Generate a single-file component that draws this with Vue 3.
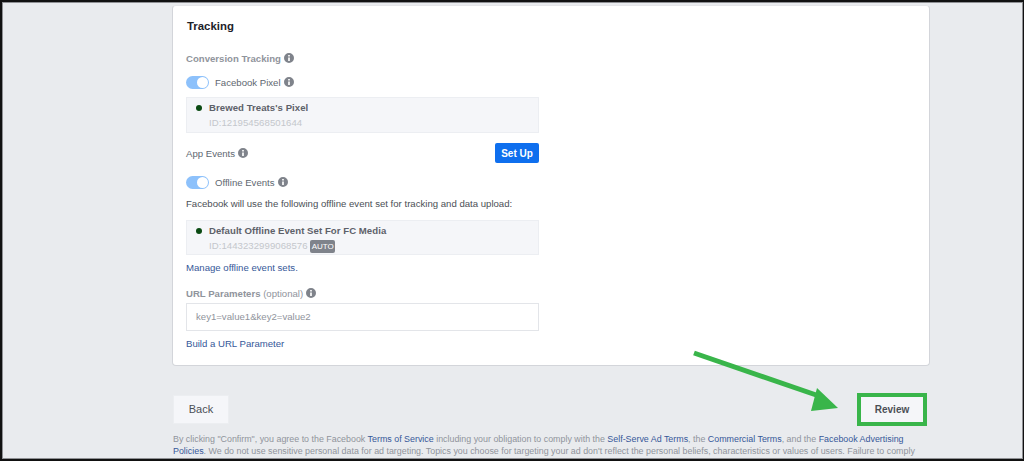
<script setup>
const infoPath = 'M6 0a6 6 0 1 0 0 12A6 6 0 0 0 6 0zm-1 2.4h2v1.9H5V2.4zm0 3h2v4.2H5V5.4z'
</script>

<template>
  <div class="frame">
    <main class="page">
      <section class="card">
        <h2 class="title">Tracking</h2>

        <div class="row heading">
          <span class="muted-label">Conversion Tracking</span>
          <svg class="info" viewBox="0 0 12 12"><path :d="infoPath" fill-rule="evenodd" /></svg>
        </div>

        <div class="row toggle-row">
          <span class="toggle"><span class="knob"></span></span>
          <span class="label">Facebook Pixel</span>
          <svg class="info" viewBox="0 0 12 12"><path :d="infoPath" fill-rule="evenodd" /></svg>
        </div>

        <div class="source">
          <span class="dot"></span>
          <div>
            <div class="source-name">Brewed Treats's Pixel</div>
            <div class="source-id">ID:121954568501644</div>
          </div>
        </div>

        <div class="row app-events">
          <span class="label">App Events</span>
          <svg class="info" viewBox="0 0 12 12"><path :d="infoPath" fill-rule="evenodd" /></svg>
          <button class="setup">Set Up</button>
        </div>

        <div class="row toggle-row offline">
          <span class="toggle"><span class="knob"></span></span>
          <span class="label">Offline Events</span>
          <svg class="info" viewBox="0 0 12 12"><path :d="infoPath" fill-rule="evenodd" /></svg>
        </div>

        <p class="desc">Facebook will use the following offline event set for tracking and data upload:</p>

        <div class="source second">
          <span class="dot"></span>
          <div>
            <div class="source-name">Default Offline Event Set For FC Media</div>
            <div class="source-id">ID:1443232999068576 <span class="auto">AUTO</span></div>
          </div>
        </div>

        <a class="link manage">Manage offline event sets.</a>

        <div class="row url-label">
          <span class="muted-label">URL Parameters <span class="optional">(optional)</span></span>
          <svg class="info" viewBox="0 0 12 12"><path :d="infoPath" fill-rule="evenodd" /></svg>
        </div>

        <div class="input">key1=value1&amp;key2=value2</div>

        <a class="link build">Build a URL Parameter</a>
      </section>

      <div class="actions">
        <button class="btn back">Back</button>
        <div class="highlight"><button class="btn review">Review</button></div>
      </div>

      <p class="legal">By clicking "Confirm", you agree to the Facebook <a>Terms of Service</a> including your obligation to comply with the <a>Self-Serve Ad Terms</a>, the <a>Commercial Terms</a>, and the <a>Facebook Advertising</a><br /><a>Policies</a>. We do not use sensitive personal data for ad targeting. Topics you choose for targeting your ad don't reflect the personal beliefs, characteristics or values of users. Failure to comply</p>
    </main>

    <svg class="arrow" viewBox="0 0 1024 461" aria-hidden="true">
      <path d="M694 353 L822 397" stroke="#39b54a" stroke-width="5" fill="none" />
      <path d="M817 388 L838 408 L811 411 Z" fill="#39b54a" />
    </svg>
  </div>
</template>

<style>
html, body { margin: 0; height: 100%; overflow: hidden; background: #e9ebee; }
</style>

<style scoped>
.frame {
  position: relative;
  box-sizing: border-box;
  width: 1024px;
  height: 461px;
  overflow: hidden;
  background: #e9ebee;
  border: solid #111;
  border-width: 2px 1px 2px 2px;
  box-shadow: inset 0 0 0 1px #8f9094;
  font-family: "Liberation Sans", Arial, sans-serif;
  font-size: 9.6px;
  color: #4b4f56;
}
.page { width: 758px; margin-left: 170px; padding-top: 3px; }
.card {
  box-sizing: border-box;
  height: 361px;
  padding: 0 13px;
  background: #fff;
  border: 1px solid #d3d5da;
  border-top-color: #e5e6e9;
  border-radius: 4px;
}
.title { margin: 13px 0 0; padding-left: 1px; font-size: 11.4px; line-height: 14px; font-weight: 700; color: #1d2129; }
.row { display: flex; align-items: center; height: 14px; gap: 3px; width: 353px; }
.heading { margin-top: 18px; }
.muted-label { color: #90949c; font-weight: 700; }
.optional { font-weight: 400; }
.label { color: #606770; }
.info { width: 10px; height: 10px; fill: #7f838b; flex: none; }
.toggle-row { margin-top: 10px; }
.toggle-row .label { margin-left: 3px; }
.toggle {
  position: relative;
  width: 23px;
  height: 13px;
  border-radius: 7px;
  background: #8dc1fb;
  flex: none;
}
.knob {
  position: absolute;
  top: 1px;
  right: 1px;
  width: 11px;
  height: 11px;
  border-radius: 50%;
  background: #fff;
}
.source {
  box-sizing: border-box;
  display: flex;
  gap: 7px;
  width: 353px;
  height: 36px;
  margin-top: 8px;
  padding: 3px 9px;
  background: #f5f6f9;
  border: 1px solid #eceef2;
}
.dot { width: 6px; height: 6px; margin-top: 4px; border-radius: 50%; background: #0a4a12; flex: none; }
.source-name { font-weight: 700; line-height: 14px; color: #5d6169; letter-spacing: .05px; }
.source-id { line-height: 15px; color: #c4c7cc; letter-spacing: .05px; }
.auto {
  display: inline-block;
  box-sizing: border-box;
  width: 25px;
  height: 13px;
  line-height: 13px;
  text-align: center;
  border-radius: 2px;
  background: #7f838b;
  color: #fff;
  font-size: 8px;
  letter-spacing: 0;
}
.app-events { margin-top: 10px; height: 20px; }
.setup {
  margin-left: auto;
  width: 44px;
  height: 20px;
  padding: 0;
  border: 0;
  border-radius: 2px;
  background: #0f6fee;
  color: #fff;
  font: 700 10px "Liberation Sans", Arial, sans-serif;
}
.offline { margin-top: 12px; }
.desc { margin: 8px 0 0; line-height: 14px; color: #4b4f56; }
.second { margin-top: 9px; height: 35px; }
.link { display: block; line-height: 14px; color: #365899; }
.manage { margin-top: 6px; }
.url-label { margin-top: 11px; }
.input {
  box-sizing: border-box;
  width: 353px;
  height: 28px;
  margin-top: 3px;
  padding-left: 9px;
  line-height: 26px;
  background: #fff;
  border: 1px solid #e3e5e9;
  color: #90949c;
}
.build { margin-top: 6px; }
.actions {
  display: flex;
  justify-content: space-between;
  align-items: center;
  height: 32px;
  margin-top: 27px;
  padding: 0 3px 0 1px;
}
.btn {
  background: #f5f6f9;
  border: 1px solid #eceef1;
  color: #4b4f56;
  font: 700 10px "Liberation Sans", Arial, sans-serif;
  padding: 0;
}
.back { width: 56px; height: 29px; font-weight: 400; font-size: 11px; }
.highlight { box-sizing: border-box; width: 70px; height: 33px; border: 4px solid #39b54a; }
.review { display: block; width: 100%; height: 100%; border: 0; }
.legal {
  margin: 8px 0 0 1px;
  width: 750px;
  font-size: 8.88px;
  line-height: 12px;
  color: #90949c;
  white-space: nowrap;
}
.legal a { color: #365899; }
.arrow { position: absolute; left: -2px; top: -2px; width: 1024px; height: 461px; pointer-events: none; }
</style>
